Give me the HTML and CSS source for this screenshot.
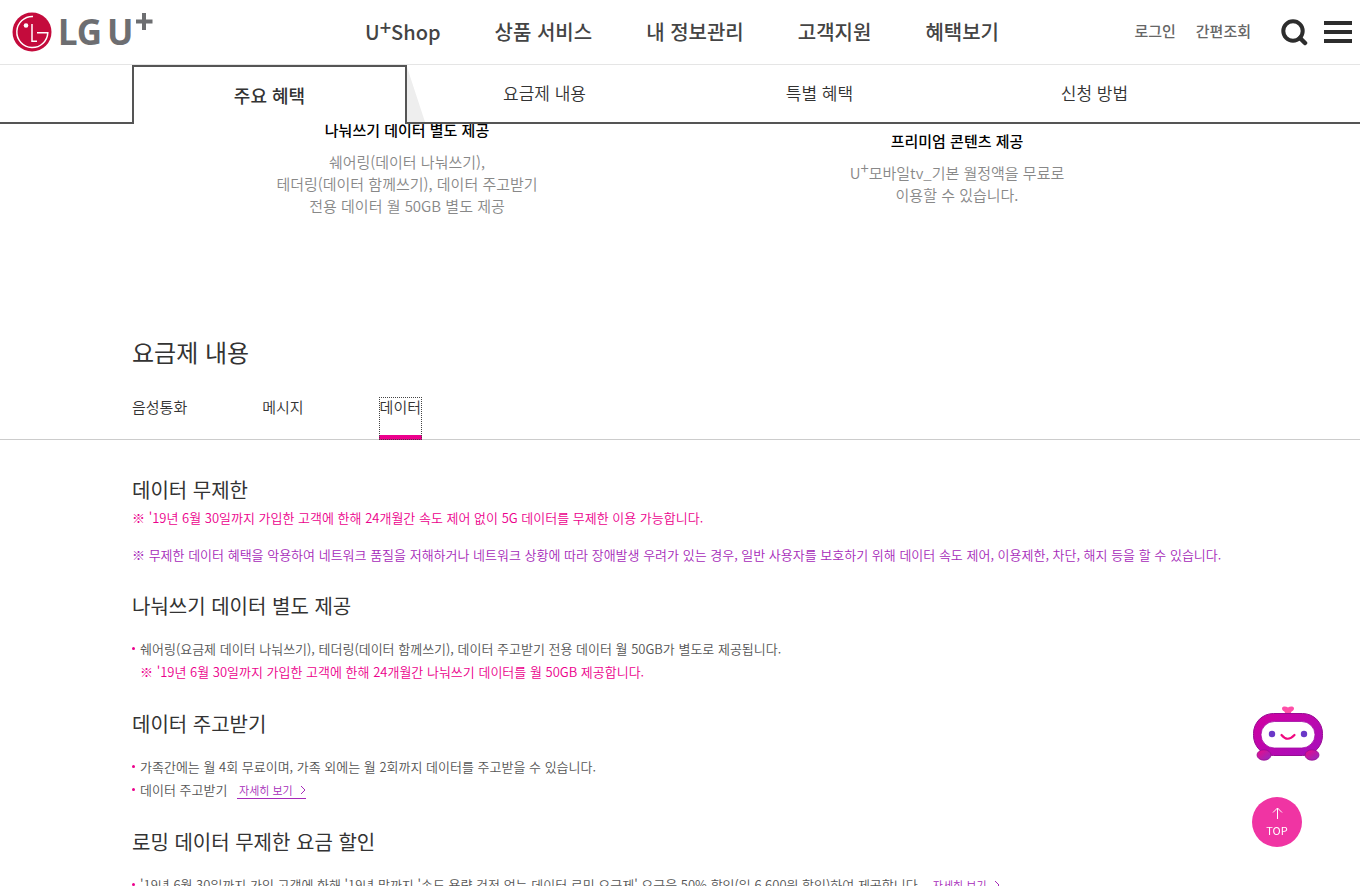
FILE: index.html
```html
<!DOCTYPE html>
<html lang="ko">
<head>
    <meta charset="UTF-8">
    <meta name="viewport" content="width=device-width, initial-scale=1.0">
    <title>LG U+ 요금제</title>
    <link rel="stylesheet" href="styles.css">
</head>
<body>

    <div class="top">
        <header class="header">
            <a href="#" class="logo" aria-label="LG U+">
                <svg width="144" height="52" viewBox="0 -5 144 52">
                    <circle cx="20" cy="21" r="19.5" fill="#c40b3c"/>
                    <path d="M21 5.500A15.500 15.500 0 1 0 35.800 21.700H25" fill="none" stroke="#fff" stroke-width="1.500"/>
                    <path d="M20 13v17.300h5" fill="none" stroke="#fff" stroke-width="1.500"/>
                    <circle cx="14" cy="14.500" r="2.300" fill="#fff"/>
                    <text x="46" y="34" class="logo-text">LG</text>
                    <text x="95" y="34" class="logo-text">U</text>
                    <path d="M132 2v17M124 10.500h16.500" fill="none" stroke="#6d6e71" stroke-width="4"/>
                </svg>
            </a>
            <nav class="gnb">
                <a href="#">U<sup>+</sup>Shop</a>
                <a href="#">상품 서비스</a>
                <a href="#">내 정보관리</a>
                <a href="#">고객지원</a>
                <a href="#">혜택보기</a>
            </nav>
            <div class="util">
                <a href="#">로그인</a>
                <a href="#">간편조회</a>
                <button type="button" class="icon-btn search" aria-label="검색">
                    <svg width="28" height="28" viewBox="0 0 28 28" fill="none" stroke="#2d2d2d">
                        <circle cx="12" cy="13" r="9.700" stroke-width="4"/>
                        <path d="M19 20l5 5" stroke-width="4.500" stroke-linecap="round"/>
                    </svg>
                </button>
                <button type="button" class="icon-btn" aria-label="메뉴">
                    <svg width="28" height="22" viewBox="0 0 28 22" fill="#2d2d2d">
                        <path d="M0 0h28v4H0zM0 9h28v4H0zM0 18h28v4H0z"/>
                    </svg>
                </button>
            </div>
        </header>
        <nav class="tab-bar">
            <div class="tabs">
                <a href="#" class="tab active">주요 혜택</a>
                <a href="#plan" class="tab">요금제 내용</a>
                <a href="#" class="tab">특별 혜택</a>
                <a href="#" class="tab">신청 방법</a>
            </div>
        </nav>
    </div>

    <main>
        <div class="benefits">
            <div class="benefit">
                <strong>나눠쓰기 데이터 별도 제공</strong>
                <p>쉐어링(데이터 나눠쓰기),<br>테더링(데이터 함께쓰기), 데이터 주고받기<br>전용 데이터 월 50GB 별도 제공</p>
            </div>
            <div class="benefit">
                <strong>프리미엄 콘텐츠 제공</strong>
                <p>U<sup>+</sup>모바일tv_기본 월정액을 무료로<br>이용할 수 있습니다.</p>
            </div>
        </div>

        <h2 class="inner" id="plan">요금제 내용</h2>
        <div class="sub-tabs">
            <div class="inner">
                <a href="#">음성통화</a>
                <a href="#">메시지</a>
                <a href="#" class="active">데이터</a>
            </div>
        </div>

        <div class="inner detail">
            <section class="notice">
                <h3>데이터 무제한</h3>
                <p class="pink">※ '19년 6월 30일까지 가입한 고객에 한해 24개월간 속도 제어 없이 5G 데이터를 무제한 이용 가능합니다.</p>
                <p class="purple">※ 무제한 데이터 혜택을 악용하여 네트워크 품질을 저해하거나 네트워크 상황에 따라 장애발생 우려가 있는 경우, 일반 사용자를 보호하기 위해 데이터 속도 제어, 이용제한, 차단, 해지 등을 할 수 있습니다.</p>
            </section>
            <section>
                <h3>나눠쓰기 데이터 별도 제공</h3>
                <ul>
                    <li>쉐어링(요금제 데이터 나눠쓰기), 테더링(데이터 함께쓰기), 데이터 주고받기 전용 데이터 월 50GB가 별도로 제공됩니다.
                        <p class="pink">※ '19년 6월 30일까지 가입한 고객에 한해 24개월간 나눠쓰기 데이터를 월 50GB 제공합니다.</p>
                    </li>
                </ul>
            </section>
            <section>
                <h3>데이터 주고받기</h3>
                <ul>
                    <li>가족간에는 월 4회 무료이며, 가족 외에는 월 2회까지 데이터를 주고받을 수 있습니다.</li>
                    <li>데이터 주고받기 <a href="#" class="more">자세히 보기<svg width="6" height="10" viewBox="0 0 6 10"><path d="M1 1l4 4-4 4" fill="none" stroke="currentColor"/></svg></a></li>
                </ul>
            </section>
            <section>
                <h3>로밍 데이터 무제한 요금 할인</h3>
                <ul>
                    <li>'19년 6월 30일까지 가입 고객에 한해 '19년 말까지 '속도 용량 걱정 없는 데이터 로밍 요금제' 요금을 50% 할인(일 6,600원 할인)하여 제공합니다. <a href="#" class="more">자세히 보기<svg width="6" height="10" viewBox="0 0 6 10"><path d="M1 1l4 4-4 4" fill="none" stroke="currentColor"/></svg></a></li>
                </ul>
            </section>
        </div>
    </main>

    <div class="floating">
        <button type="button" class="chatbot" aria-label="챗봇">
            <svg width="72" height="56" viewBox="0 0 72 56">
                <defs>
                    <linearGradient id="body" x1="0" y1="0" x2="1" y2="1">
                        <stop offset="0" stop-color="#d2009f"/>
                        <stop offset="1" stop-color="#a60fbd"/>
                    </linearGradient>
                    <linearGradient id="foot" x1="0" y1="0" x2="1" y2="1">
                        <stop offset="0" stop-color="#ee0a86"/>
                        <stop offset="1" stop-color="#8e2cc4"/>
                    </linearGradient>
                </defs>
                <path d="M33 7c0-2-3-2-3-4.500C30 0 34 0 36 1.500 38 0 42 0 42 2.500 42 5 39 5 39 7z" fill="#ff4fa8"/>
                <rect x="1.500" y="7.500" width="69" height="42" rx="20" fill="url(#body)" stroke="#970c93"/>
                <rect x="9" y="15.500" width="54" height="26.500" rx="13.250" fill="#fff" stroke="#a20aa4" stroke-width=".8"/>
                <circle cx="20" cy="28" r="3.200" fill="#6a38c8"/>
                <circle cx="52" cy="28" r="3.200" fill="#6a38c8"/>
                <path d="M29.500 29q6 7.500 13 0" fill="none" stroke="#f0087f" stroke-width="2.200" stroke-linecap="round"/>
                <ellipse cx="12" cy="49" rx="7" ry="5.200" fill="url(#foot)" stroke="#970c93" stroke-width=".8"/>
                <ellipse cx="60" cy="49" rx="7" ry="5.200" fill="url(#foot)" stroke="#970c93" stroke-width=".8"/>
            </svg>
        </button>
        <a href="#" class="go-top">
            <svg width="11" height="12" viewBox="0 0 11 12" fill="none" stroke="#fff"><path d="M5.500 12V1M1 5.500L5.500 1 10 5.500"/></svg>
            TOP
        </a>
    </div>

</body>
</html>
```
FILE: styles.css
```css
* {
    margin: 0;
    padding: 0;
    box-sizing: border-box;
}
body {
    font-family: "Noto Sans CJK KR", sans-serif;
    font-size: 13px;
    font-weight: 350;
    line-height: 23px;
    color: #555;
    background: #fff;
    height: 100vh;
    overflow: hidden;
}
a {
    color: inherit;
    text-decoration: none;
}
button {
    background: none;
    border: none;
    cursor: pointer;
}
ul {
    list-style: none;
}
sup {
    line-height: 0;
    font-size: 1em;
    vertical-align: 5px;
}
.inner {
    width: 100%;
    max-width: 1096px;
    margin: 0 auto;
}

/* header */
.top {
    position: sticky;
    top: 0;
    z-index: 10;
    background: #fff;
}
.header {
    display: grid;
    grid-template-columns: 1fr auto 1fr;
    align-items: center;
    height: 65px;
    padding: 0 8px 0 12px;
    border-bottom: 1px solid #e5e5e5;
}
.logo svg {
    display: block;
}
.logo-text {
    font-family: "Noto Sans", sans-serif;
    font-size: 35px;
    font-weight: 700;
    fill: #6d6e71;
}
.gnb {
    display: flex;
    gap: 54px;
    font-size: 20px;
    font-weight: 500;
    line-height: 28px;
    color: #444;
}
.util {
    display: flex;
    justify-content: flex-end;
    align-items: center;
    gap: 20px;
    font-size: 15px;
    font-weight: 500;
    line-height: 20px;
    color: #666;
}
.util a {
    padding-bottom: 2px;
}
.icon-btn svg {
    display: block;
}
.search {
    margin: 0 -5px 0 10px;
}

/* anchor tabs */
.tab-bar {
    height: 59px;
    padding-left: 4px;
    background: linear-gradient(#555, #555) bottom / 100% 2px no-repeat;
}
.tabs {
    display: flex;
    max-width: 1100px;
    height: 59px;
    margin: 0 auto;
}
.tab {
    width: 25%;
    text-align: center;
    font-size: 17px;
    line-height: 56px;
    color: #333;
}
.tab.active {
    position: relative;
    font-size: 18px;
    font-weight: 500;
    background: #fff;
    border: 2px solid #555;
    border-bottom: none;
}
.tab.active::after {
    content: "";
    position: absolute;
    left: 100%;
    top: 0;
    margin-left: 2px;
    width: 18px;
    height: 55px;
    background: #eee;
    clip-path: polygon(0 0, 100% 100%, 0 100%);
}

/* benefits */
.benefits {
    display: flex;
    align-items: center;
    max-width: 1104px;
    margin: -5px auto 117px;
    padding-left: 4px;
    text-align: center;
}
.benefit {
    flex: 1;
    font-size: 15px;
    line-height: 22px;
    color: #888;
}
.benefit strong {
    display: block;
    margin-bottom: 10px;
    font-size: 15px;
    font-weight: 500;
    color: #000;
}

/* plan */
h2 {
    font-size: 24px;
    font-weight: 400;
    line-height: 36px;
    color: #333;
}
.sub-tabs {
    margin-top: 27px;
    border-bottom: 1px solid #ccc;
}
.sub-tabs .inner {
    display: flex;
    gap: 75px;
}
.sub-tabs a {
    height: 43px;
    margin-bottom: -1px;
    font-size: 15px;
    line-height: 20px;
    color: #333;
}
.sub-tabs .active {
    padding: 0 1px;
    border-bottom: 5px solid #ec008c;
    outline: 1px dotted #444;
    outline-offset: -1px;
}
.detail {
    padding-top: 35px;
}
section {
    margin-bottom: 26px;
}
h3 {
    margin-bottom: 16px;
    font-size: 20px;
    font-weight: 400;
    line-height: 30px;
    color: #333;
}
.notice {
    margin-bottom: 25px;
}
.notice h3 {
    margin-bottom: 1px;
}
.notice .purple {
    margin-top: 14px;
}
.pink {
    color: #ec008c;
}
.purple {
    color: #a62ab9;
}
li {
    position: relative;
    padding-left: 8px;
}
li::before {
    content: "";
    position: absolute;
    left: 0;
    top: 10px;
    width: 3px;
    height: 3px;
    border-radius: 50%;
    background: #ec008c;
}
.more {
    display: inline-flex;
    align-items: center;
    gap: 7px;
    margin-left: 6px;
    padding-left: 2px;
    border-bottom: 1px solid #a62ab9;
    font-size: 11px;
    line-height: 16px;
    color: #a62ab9;
}

/* floating buttons */
.floating {
    position: fixed;
    right: 36px;
    bottom: 39px;
    z-index: 20;
    display: flex;
    flex-direction: column;
    gap: 35px;
}
.chatbot svg {
    display: block;
}
.go-top {
    display: flex;
    flex-direction: column;
    align-items: center;
    width: 50px;
    height: 50px;
    padding-top: 10px;
    border-radius: 50%;
    background: #f034a3;
    font-size: 11px;
    font-weight: 400;
    color: #fff;
}
```
